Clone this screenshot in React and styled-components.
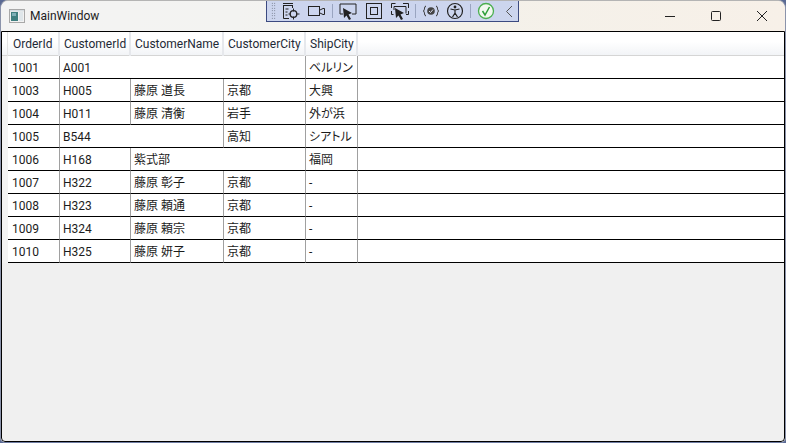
import React from "react";
import styled, { createGlobalStyle } from "styled-components";

const Global = createGlobalStyle`
  html, body { margin: 0; padding: 0; width: 786px; height: 443px; overflow: hidden; background: #5a6a94; }
  #root { width: 786px; height: 443px; }
  * { box-sizing: border-box; }
`;

const WindowFrame = styled.div`
  position: relative;
  width: 786px;
  height: 443px;
  display: flex;
  flex-direction: column;
  border: 1px solid #b4b4b4;
  border-left-color: #8b93ab;
  border-right-color: #8b93ab;
  border-bottom-color: #6f7da3;
  border-radius: 8px 8px 5px 5px;
  overflow: hidden;
  background: #f0f0f0;
  font-family: Roboto, "Noto Sans CJK JP", sans-serif;
  font-feature-settings: "palt";
  color: #1a1a1a;
`;

const TitleBar = styled.div`
  height: 30px;
  flex: none;
  display: flex;
  align-items: center;
  padding-left: 8px;
  background: linear-gradient(90deg, #f3f3f3 0%, #f3f3f1 30%, #f4f1ea 60%, #f7f0e8 100%);
`;

const TitleText = styled.span`
  margin-left: 5px;
  font-size: 12px;
  color: #1c1c1c;
`;

const Caption = styled.div`
  margin-left: auto;
  display: flex;
`;

const CaptionButton = styled.div`
  width: 46px;
  height: 30px;
  display: flex;
  align-items: center;
  justify-content: center;
`;

const Client = styled.div`
  flex: 1;
  border: 1px solid #000;
  background: #f0f0f0;
  display: flex;
  flex-direction: column;
  border-radius: 0 0 4px 4px;
`;

const HeaderRow = styled.div`
  display: flex;
  height: 24px;
  background: linear-gradient(180deg, #ffffff 0%, #ffffff 40%, #f1f3f6 100%);
  box-shadow: inset 0 -1px 0 #d5d5d5;
`;

const Gutter = styled.div`
  width: 6px;
  border-right: 1px solid #e3e3e3;
`;

const HeaderCell = styled.div`
  width: ${(p) => p.$w}px;
  flex: ${(p) => (p.$fill ? 1 : "none")};
  border-right: ${(p) => (p.$fill ? "none" : "2px solid #e6e8ec")};
  padding-left: ${(p) => (p.$first ? 5 : 4)}px;
  font-size: 12px;
  line-height: 25px;
  color: #1e2a36;
  white-space: nowrap;
`;

const Row = styled.div`
  display: flex;
  height: 23px;
  padding-left: 6px;
  background: linear-gradient(90deg, #f3f3f3 0, #f3f3f3 6px, #ffffff 6px);
`;

const BodyCell = styled.div`
  width: ${(p) => p.$w}px;
  flex: ${(p) => (p.$fill ? 1 : "none")};
  border-right: ${(p) => (p.$fill ? "none" : "1px solid #a0a0a0")};
  border-bottom: 1px solid #000;
  padding-left: ${(p) => (p.$first ? 4 : 3)}px;
  font-size: 12px;
  line-height: 24px;
  white-space: nowrap;
  color: #1c1c1c;
`;

const Toolbar = styled.div`
  position: absolute;
  left: 265px;
  top: -1px;
  width: 253px;
  height: 22px;
  display: flex;
  align-items: center;
  background: #ccd5ee;
  border: 1px solid #3c4a80;
  border-top: none;
  padding-left: 4px;
`;

const Grip = styled.div`
  flex: none;
  width: 5px;
  height: 18px;
  margin-right: 6px;
  background-image: radial-gradient(#5a6170 0.7px, transparent 0.8px);
  background-size: 2.5px 2.5px;
`;

const ToolIcon = styled.svg`
  flex: none;
  width: ${(p) => p.$w || 18}px;
  height: 18px;
  margin-right: ${(p) => p.$gap || 0}px;
  display: block;
`;

const Sep = styled.div`
  flex: none;
  width: 1px;
  height: 14px;
  background: #9aa5c0;
  margin-right: ${(p) => p.$gap || 6}px;
`;

const cols = [
  ["OrderId", 52],
  ["CustomerId", 71],
  ["CustomerName", 93],
  ["CustomerCity", 82],
  ["ShipCity", 52],
];

const rows = [
  [["1001", 51], ["A001", 246], ["ベルリン", 52]],
  [["1003", 51], ["H005", 71], ["藤原 道長", 93], ["京都", 82], ["大興", 52]],
  [["1004", 51], ["H011", 71], ["藤原 清衡", 93], ["岩手", 82], ["外が浜", 52]],
  [["1005", 51], ["B544", 164], ["高知", 82], ["シアトル", 52]],
  [["1006", 51], ["H168", 71], ["紫式部", 175], ["福岡", 52]],
  [["1007", 51], ["H322", 71], ["藤原 彰子", 93], ["京都", 82], ["-", 52]],
  [["1008", 51], ["H323", 71], ["藤原 頼通", 93], ["京都", 82], ["-", 52]],
  [["1009", 51], ["H324", 71], ["藤原 頼宗", 93], ["京都", 82], ["-", 52]],
  [["1010", 51], ["H325", 71], ["藤原 妍子", 93], ["京都", 82], ["-", 52]],
];

const AppIcon = () => (
  <svg width="16" height="16" viewBox="0 0 16 16" style={{ flex: "none" }}>
    <rect x="0.5" y="1.5" width="15" height="13" fill="#f2f2f2" stroke="#a8a8a8" />
    <rect x="2" y="4" width="7" height="9" fill="#3f7f80" />
    <rect x="3" y="5" width="4" height="3" fill="#7fb0b8" />
    <rect x="10" y="4" width="4" height="9" fill="#dfe6ea" />
    <rect x="1" y="2" width="14" height="1.5" fill="#d6dde2" />
  </svg>
);

const arrow = "M4 6L13 11 9.500 12.500 12 17 10 18 7.500 13.500 5 16z";

export default function App() {
  return (
    <>
      <Global />
      <WindowFrame>
        <TitleBar>
          <AppIcon />
          <TitleText>MainWindow</TitleText>
          <Caption>
            <CaptionButton>
              <svg width="12" height="12" viewBox="0 0 12 12">
                <path d="M1 6.500h10" stroke="#222" strokeWidth="1" />
              </svg>
            </CaptionButton>
            <CaptionButton>
              <svg width="12" height="12" viewBox="0 0 12 12">
                <rect x="1.500" y="1.500" width="9" height="9" rx="1" fill="none" stroke="#222" />
              </svg>
            </CaptionButton>
            <CaptionButton>
              <svg width="12" height="12" viewBox="0 0 12 12">
                <path d="M1 1l10 10M11 1L1 11" stroke="#222" strokeWidth="1" />
              </svg>
            </CaptionButton>
          </Caption>
        </TitleBar>
        <Client>
          <HeaderRow>
            <Gutter />
            {cols.map(([t, w], i) => (
              <HeaderCell key={t} $w={w} $first={i === 0}>{t}</HeaderCell>
            ))}
            <HeaderCell $fill />
          </HeaderRow>
          {rows.map((r) => (
            <Row key={r[0][0]}>
              {r.map(([t, w], i) => (
                <BodyCell key={t} $w={i === 0 ? w + 1 : w} $first={i === 0}>{t}</BodyCell>
              ))}
              <BodyCell $fill />
            </Row>
          ))}
        </Client>
        <Toolbar>
          <Grip />
          <ToolIcon viewBox="0 0 18 18" $gap={8}>
            <path d="M1 1.500h10M1 3.500h10" stroke="#222" strokeWidth="1.200" />
            <path d="M1.500 3v13.500h5.500M10.500 3v3" fill="none" stroke="#222" />
            <path d="M3.500 7h3M3.500 10h2M3.500 13h2" stroke="#222" />
            <circle cx="11.500" cy="12" r="3.300" fill="none" stroke="#222" strokeWidth="1.300" />
            <path d="M11.500 6.500v3M11.500 14.500v3M6.500 12h2.500M14 12h3.500" stroke="#222" />
          </ToolIcon>
          <ToolIcon viewBox="0 0 18 18" $gap={6}>
            <rect x="0.500" y="4.500" width="11" height="9" fill="none" stroke="#222" />
            <path d="M12 8l3-1.500h1.500v6H15l-3-1.500" fill="none" stroke="#222" />
          </ToolIcon>
          <Sep $gap={6} />
          <ToolIcon viewBox="0 0 18 18" $gap={8}>
            <path d="M4 12H1V2h16v10h-4" fill="none" stroke="#222" />
            <path d={arrow} fill="#222" />
          </ToolIcon>
          <ToolIcon viewBox="0 0 18 18" $gap={8}>
            <rect x="1.500" y="1.500" width="15" height="15" fill="none" stroke="#222" />
            <rect x="5.500" y="5.500" width="7" height="7" fill="none" stroke="#222" />
          </ToolIcon>
          <ToolIcon viewBox="0 0 18 18" $gap={6}>
            <path d="M0.500 6V1.500h4M12 1.500h5.500V6M0.500 9v3.500h2M17.500 9v3.500H15" fill="none" stroke="#222" />
            <path d="M3 8V4.500h12v7" fill="none" stroke="#222" />
            <path d={arrow} fill="#222" />
          </ToolIcon>
          <Sep $gap={6} />
          <ToolIcon viewBox="0 0 18 18" $gap={6}>
            <path d="M4 4C2 4 3 8 1.500 9 3 10 2 14 4 14M14 4c2 0 1 4 2.500 5-1.500 1-.5 5-2.500 5" fill="none" stroke="#333" />
            <circle cx="9" cy="9" r="3.800" fill="#444" />
            <path d="M7 9l1.500 1.500L11 7.500" fill="none" stroke="#dde" />
          </ToolIcon>
          <ToolIcon viewBox="0 0 18 18" $gap={6}>
            <circle cx="9" cy="9" r="7.500" fill="none" stroke="#222" strokeWidth="1.200" />
            <circle cx="9" cy="5" r="1.400" fill="#222" />
            <path d="M4.500 7l4.500 1 4.500-1M9 8v3l-2.500 4M9 11l2.500 4" fill="none" stroke="#222" strokeWidth="1.200" />
          </ToolIcon>
          <Sep $gap={6} />
          <ToolIcon viewBox="0 0 18 18" $gap={8}>
            <circle cx="9" cy="9" r="7.500" fill="#f2f8f0" stroke="#4caf50" strokeWidth="1.300" />
            <path d="M5.500 9l2.500 4 4.500-8" fill="none" stroke="#2e9e3a" strokeWidth="1.500" />
          </ToolIcon>
          <ToolIcon viewBox="0 0 12 18" $w={12}>
            <path d="M9 4L3.500 9.500 9 15" fill="none" stroke="#555" />
          </ToolIcon>
        </Toolbar>
      </WindowFrame>
    </>
  );
}
